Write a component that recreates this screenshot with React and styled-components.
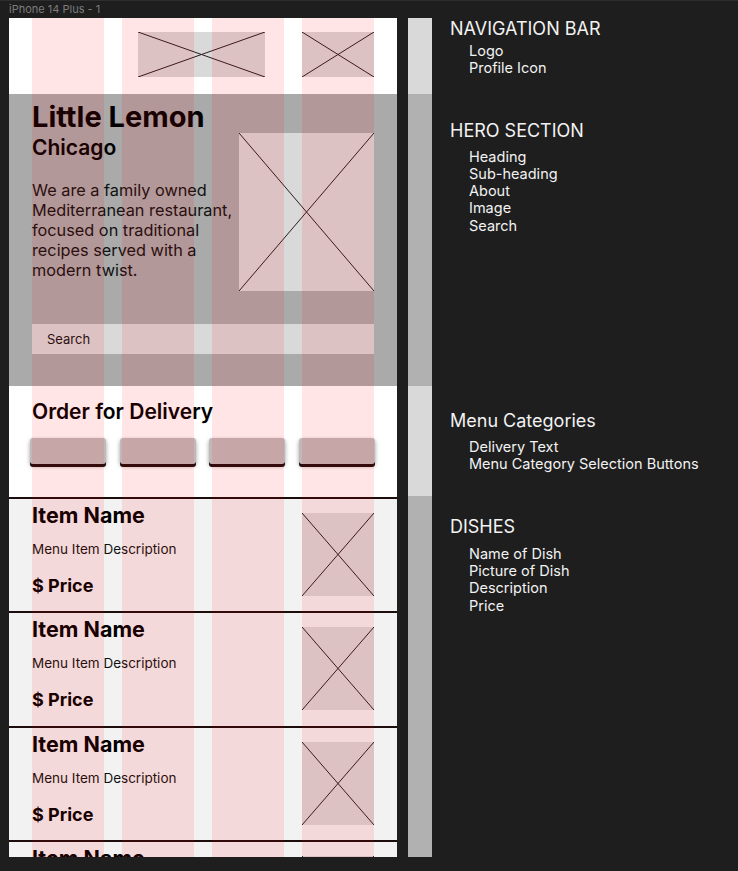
import React from 'react'
import styled, { createGlobalStyle } from 'styled-components'

const GlobalStyle = createGlobalStyle`
  body {
    margin: 0;
    background: #1e1e1e;
    font-family: 'Inter', 'Liberation Sans', sans-serif;
  }
`

const dishes = [1, 2, 3, 4]
const categories = [1, 2, 3, 4]

const notes = [
  { title: 'NAVIGATION BAR', mt: 0, gap: 3, items: ['Logo', 'Profile Icon'] },
  {
    title: 'HERO SECTION',
    mt: 44,
    gap: 7,
    items: ['Heading', 'Sub-heading', 'About', 'Image', 'Search'],
  },
  {
    title: 'Menu Categories',
    mt: 177,
    gap: 7,
    items: ['Delivery Text', 'Menu Category Selection Buttons'],
  },
  {
    title: 'DISHES',
    mt: 44,
    gap: 8,
    items: ['Name of Dish', 'Picture of Dish', 'Description', 'Price'],
  },
]

const Placeholder = ({ w, h, ...rest }) => (
  <PlaceholderBox w={w} h={h} {...rest}>
    <svg width="100%" height="100%" viewBox="0 0 100 100" preserveAspectRatio="none">
      <line x1="0" y1="0" x2="100" y2="100" stroke="#2a1c1c" strokeWidth="1" vectorEffect="non-scaling-stroke" />
      <line x1="100" y1="0" x2="0" y2="100" stroke="#2a1c1c" strokeWidth="1" vectorEffect="non-scaling-stroke" />
    </svg>
  </PlaceholderBox>
)

const App = () => (
  <Page>
    <GlobalStyle />
    <FrameColumn>
      <FrameTitle>iPhone 14 Plus - 1</FrameTitle>
      <Frame>
        <NavBar>
          <Placeholder w={127} h={45} />
          <Placeholder w={72} h={45} />
        </NavBar>

        <Hero>
          <HeroTop>
            <HeroText>
              <Title>Little Lemon</Title>
              <SubTitle>Chicago</SubTitle>
              <About>
                We are a family owned
                <br />
                Mediterranean restaurant,
                <br />
                focused on traditional
                <br />
                recipes served with a
                <br />
                modern twist.
              </About>
            </HeroText>
            <HeroImage w={135} h={158} />
          </HeroTop>
          <SearchBar>Search</SearchBar>
        </Hero>

        <Categories>
          <SectionTitle>Order for Delivery</SectionTitle>
          <ButtonRow>
            {categories.map((c) => (
              <CategoryButton key={c} />
            ))}
          </ButtonRow>
        </Categories>

        <Dishes>
          {dishes.map((d) => (
            <DishRow key={d}>
              <DishInfo>
                <DishName>Item Name</DishName>
                <DishDescription>Menu Item Description</DishDescription>
                <DishPrice>$ Price</DishPrice>
              </DishInfo>
              <DishImage w={72} h={83} />
            </DishRow>
          ))}
        </Dishes>

        <GridOverlay>
          <GridColumn />
          <GridColumn />
          <GridColumn />
          <GridColumn />
        </GridOverlay>
      </Frame>
    </FrameColumn>

    <SideBar>
      <Segment h={76} light />
      <Segment h={292} />
      <Segment h={110} light />
      <Segment h={361} />
    </SideBar>

    <Notes>
      {notes.map((group) => (
        <NoteGroup key={group.title} mt={group.mt}>
          <NoteTitle>{group.title}</NoteTitle>
          <NoteList gap={group.gap}>
            {group.items.map((item) => (
              <NoteItem key={item}>{item}</NoteItem>
            ))}
          </NoteList>
        </NoteGroup>
      ))}
    </Notes>
  </Page>
)

const Page = styled.div`
  display: flex;
  align-items: flex-start;
  height: 871px;
  padding-left: 9px;
  overflow: hidden;
  box-shadow: inset 0 1px 0 #2e2e2e;
`

const FrameColumn = styled.div`
  display: flex;
  flex-direction: column;
`

const FrameTitle = styled.div`
  height: 18px;
  font-size: 11px;
  line-height: 18px;
  color: #7c7c7c;
`

const Frame = styled.div`
  position: relative;
  width: 388px;
  height: 839px;
  overflow: hidden;
  background: #ffffff;
  color: #000000;
`

const PlaceholderBox = styled.div`
  flex: none;
  width: ${(p) => p.w}px;
  height: ${(p) => p.h}px;
  background: #d9d9d9;
  svg {
    display: block;
  }
`

const NavBar = styled.header`
  display: flex;
  justify-content: flex-end;
  align-items: flex-start;
  gap: 37px;
  height: 76px;
  box-sizing: border-box;
  padding: 14px 23px 0;
`

const Hero = styled.section`
  display: flex;
  flex-direction: column;
  height: 292px;
  box-sizing: border-box;
  padding: 0 23px;
  background: #aaaaaa;
`

const HeroTop = styled.div`
  display: flex;
  justify-content: space-between;
  align-items: flex-start;
  height: 197px;
`

const HeroText = styled.div`
  padding-top: 6px;
`

const Title = styled.h1`
  margin: 0;
  font-size: 29px;
  line-height: 34px;
  font-weight: 700;
`

const SubTitle = styled.h2`
  margin: 2px 0 0;
  font-size: 21px;
  line-height: 24px;
  font-weight: 600;
`

const About = styled.p`
  margin: 20px 0 0;
  font-size: 16.3px;
  line-height: 20px;
  color: #111;
`

const HeroImage = styled(Placeholder)`
  margin-top: 39px;
`

const SearchBar = styled.div`
  display: flex;
  align-items: center;
  height: 30px;
  margin-top: 33px;
  padding-left: 15px;
  background: #d9d9d9;
  font-size: 13px;
  color: #111;
`

const Categories = styled.section`
  height: 111px;
  box-sizing: border-box;
  padding: 14px 22px 0 21px;
`

const SectionTitle = styled.h3`
  margin: 0 0 0 2px;
  font-size: 21px;
  line-height: 24px;
  font-weight: 600;
`

const ButtonRow = styled.div`
  display: flex;
  justify-content: space-between;
  margin-top: 14px;
`

const CategoryButton = styled.div`
  width: 76px;
  height: 26px;
  border-radius: 3px;
  background: #c0b9b9;
  box-shadow: 0 3px 0 #1f0c0c, 0 2px 4px rgba(0, 0, 0, 0.4);
`

const Dishes = styled.section`
  background: #f2f2f2;
`

const DishRow = styled.article`
  display: flex;
  justify-content: space-between;
  align-items: flex-start;
  height: 114.3px;
  box-sizing: border-box;
  padding: 4px 23px 0 23px;
  border-top: 2px solid #1c0c0c;
`

const DishInfo = styled.div`
  display: flex;
  flex-direction: column;
`

const DishName = styled.h4`
  margin: 0;
  font-size: 21.5px;
  line-height: 25px;
  font-weight: 700;
`

const DishDescription = styled.p`
  margin: 13px 0 0;
  font-size: 13.5px;
  line-height: 17px;
  color: #111;
`

const DishPrice = styled.div`
  margin-top: 17px;
  font-size: 18px;
  line-height: 22px;
  font-weight: 700;
`

const DishImage = styled(Placeholder)`
  margin-top: 10px;
`

const GridOverlay = styled.div`
  position: absolute;
  inset: 0;
  display: grid;
  grid-template-columns: repeat(4, 72px);
  column-gap: 18px;
  padding: 0 23px;
  pointer-events: none;
`

const GridColumn = styled.div`
  background: rgba(255, 0, 0, 0.1);
`

const SideBar = styled.div`
  display: flex;
  flex-direction: column;
  width: 24px;
  margin: 18px 0 0 11px;
`

const Segment = styled.div`
  height: ${(p) => p.h}px;
  background: ${(p) => (p.light ? '#d9d9d9' : '#b2b1b1')};
`

const Notes = styled.aside`
  display: flex;
  flex-direction: column;
  margin-left: 18px;
  padding-top: 19px;
  color: #f2f2f2;
`

const NoteGroup = styled.div`
  margin-top: ${(p) => p.mt}px;
`

const NoteTitle = styled.div`
  font-size: 18px;
  line-height: 20px;
`

const NoteList = styled.ul`
  margin: ${(p) => p.gap}px 0 0;
  padding: 0 0 0 19px;
  list-style: none;
`

const NoteItem = styled.li`
  font-size: 14.5px;
  line-height: 17.3px;
`

export default App
